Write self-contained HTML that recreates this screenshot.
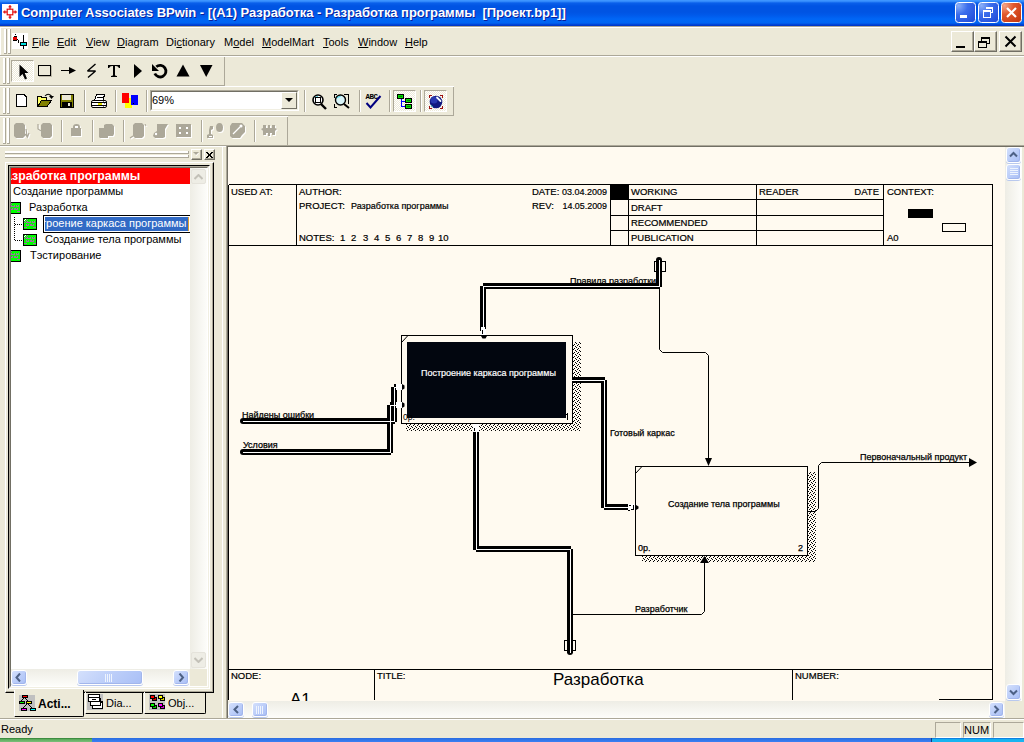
<!DOCTYPE html>
<html><head><meta charset="utf-8">
<style>
*{margin:0;padding:0;box-sizing:border-box}
html,body{width:1024px;height:742px;overflow:hidden;background:#ECE9D8;font-family:"Liberation Sans",sans-serif;font-size:11px;color:#000}
.a{position:absolute}
#title{left:0;top:0;width:1024px;height:26px;background:linear-gradient(#3D95FF 0,#3D95FF 1px,#0A60EA 3px,#0054E3 6px,#0054E3 12px,#0059EA 15px,#0066F6 19px,#0064F2 23px,#003DD0 25px,#0033C0 26px)}
#title .t{left:21px;top:5px;color:#fff;font-weight:bold;font-size:13px;letter-spacing:-0.05px;text-shadow:1px 1px 0 #0A1E9A;white-space:nowrap}
.sep-d{background:#ACA899}
.sep-w{background:#fff}
.menu span{position:absolute;top:8px;white-space:nowrap}
.menu u{text-decoration:underline;text-underline-offset:1px;text-decoration-thickness:1px}
.grip{width:6px}
.grip:before,.grip:after{content:"";position:absolute;top:0;bottom:0;width:3px;background:linear-gradient(90deg,#fff 0,#fff 2px,#ACA899 2px);border-bottom:1px solid #ACA899;box-sizing:border-box}
.grip:before{left:0}.grip:after{left:4px}
.tb{border-right:1px solid #ACA899;border-bottom:1px solid #ACA899;}
.vsep{width:2px;border-left:1px solid #ACA899;border-right:1px solid #fff}
.ico{width:12px;height:12px;background:#00FF00;border:1px solid #000}
.ico:after{content:"";position:absolute;left:1px;top:2px;width:8px;height:5px;border-top:1px dotted #A070A0;border-bottom:1px dotted #A070A0}
.sbtn{border:1px solid #fff;border-radius:3px;background:linear-gradient(135deg,#D4E0FC,#BCCEF9 50%,#A9BFF6);box-shadow:inset -1px -1px 0 #A2B6EC,0 1px 0 #B9C9EE}
.mdib{width:23px;height:21px;background:#ECE9D8;border-top:1px solid #fff;border-left:1px solid #fff;border-right:1px solid #716F64;border-bottom:1px solid #716F64;box-shadow:inset -1px -1px 0 #ACA899}
</style></head><body>
<!-- Title bar -->
<div id="title" class="a">
  <div class="a" style="left:2px;top:4px;width:16px;height:16px;background:#fff">
    <svg width="16" height="16" viewBox="0 0 17 17" style="position:absolute;left:0;top:0"><g stroke="#E00000" stroke-width="1.2" fill="none"><rect x="5.5" y="5.5" width="6" height="6"/><line x1="8.5" y1="1" x2="8.5" y2="5.5"/><line x1="8.5" y1="11.5" x2="8.5" y2="16"/><line x1="1" y1="8.5" x2="5.5" y2="8.5"/><line x1="11.5" y1="8.5" x2="16" y2="8.5"/><line x1="7" y1="3" x2="10" y2="3"/><line x1="7" y1="14" x2="10" y2="14"/><line x1="3" y1="7" x2="3" y2="10"/><line x1="14" y1="7" x2="14" y2="10"/></g></svg>
  </div>
  <div class="a t">Computer Associates BPwin - [(A1) Разработка - Разработка программы&nbsp; [Проект.bp1]]</div>
  <!-- buttons -->
  <svg class="a" style="left:954px;top:2px" width="70" height="22">
    <defs>
      <radialGradient id="bb" cx="0.15" cy="0.15" r="1"><stop offset="0" stop-color="#8CB0F8"/><stop offset="0.45" stop-color="#3C6EEC"/><stop offset="1" stop-color="#2450DC"/></radialGradient>
      <radialGradient id="rb" cx="0.15" cy="0.15" r="1"><stop offset="0" stop-color="#F4A488"/><stop offset="0.45" stop-color="#E2582C"/><stop offset="1" stop-color="#C83C14"/></radialGradient>
    </defs>
    <rect x="1.5" y="0.5" width="20" height="20" rx="3" fill="url(#bb)" stroke="#fff" stroke-width="1"/>
    <rect x="24.5" y="0.5" width="20" height="20" rx="3" fill="url(#bb)" stroke="#fff" stroke-width="1"/>
    <rect x="47.5" y="0.5" width="20" height="20" rx="3" fill="url(#rb)" stroke="#fff" stroke-width="1"/>
    <g shape-rendering="crispEdges" fill="#fff">
      <rect x="6" y="13" width="7" height="3"/>
      <rect x="32" y="5" width="7" height="2"/><rect x="38" y="5" width="1" height="6"/><rect x="37" y="10" width="2" height="1"/>
    </g>
    <rect x="29.5" y="9" width="7" height="6.5" fill="none" stroke="#fff" stroke-width="1" shape-rendering="crispEdges"/>
    <rect x="29" y="8" width="8" height="2" fill="#fff" shape-rendering="crispEdges"/>
    <path d="M53 6L62 15M62 6L53 15" stroke="#fff" stroke-width="2.2"/>
  </svg>
</div>
<div class="a sep-d" style="left:0;top:26px;width:1024px;height:1px"></div>
<div class="a sep-w" style="left:0;top:27px;width:1024px;height:1px"></div>

<!-- Menu bar -->
<div class="a menu" style="left:0;top:28px;width:1024px;height:27px">
  <div class="a grip" style="left:4px;top:1px;height:25px"></div>
  <svg class="a" style="left:12px;top:5px" width="16" height="16" shape-rendering="crispEdges">
    <rect x="0" y="0" width="16" height="16" fill="#fff"/>
    <rect x="3" y="1" width="1" height="1" fill="#000"/>
    <rect x="2" y="3" width="3" height="1" fill="#000"/>
    <rect x="1" y="4" width="4" height="3" fill="#E00000"/>
    <rect x="1" y="7" width="4" height="1" fill="#000"/>
    <rect x="5" y="6" width="1" height="1" fill="#000"/>
    <rect x="6" y="7" width="1" height="3" fill="#000"/>
    <rect x="11" y="2" width="1" height="14" fill="#000"/>
    <rect x="8" y="9" width="7" height="4" fill="#000"/>
    <rect x="9" y="10" width="5" height="2" fill="#00E0E0"/>
  </svg>
  <span style="left:32px"><u>F</u>ile</span>
  <span style="left:57px"><u>E</u>dit</span>
  <span style="left:86px"><u>V</u>iew</span>
  <span style="left:117px"><u>D</u>iagram</span>
  <span style="left:166px">Di<u>c</u>tionary</span>
  <span style="left:224px">M<u>o</u>del</span>
  <span style="left:262px"><u>M</u>odelMart</span>
  <span style="left:323px"><u>T</u>ools</span>
  <span style="left:358px"><u>W</u>indow</span>
  <span style="left:405px"><u>H</u>elp</span>
</div>

<!-- MDI buttons -->
<div class="a mdib" style="left:951px;top:31px"></div>
<div class="a mdib" style="left:974px;top:31px"></div>
<div class="a mdib" style="left:999px;top:31px"></div>
<svg class="a" style="left:946px;top:26px" width="78" height="30" shape-rendering="crispEdges">
  <rect x="10" y="20" width="9" height="2" fill="#000"/>
  <rect x="35" y="11" width="9" height="2" fill="#000"/><rect x="35" y="11" width="1" height="6" fill="#000"/><rect x="43" y="11" width="1" height="7" fill="#000"/><rect x="41" y="17" width="3" height="1" fill="#000"/>
  <rect x="32" y="15" width="9" height="2" fill="#000"/><rect x="32" y="15" width="1" height="7" fill="#000"/><rect x="40" y="15" width="1" height="7" fill="#000"/><rect x="32" y="21" width="9" height="1" fill="#000"/>
  <path d="M59.5 10.5L69.5 20.5M69.5 10.5L59.5 20.5" stroke="#000" stroke-width="2" shape-rendering="geometricPrecision"/>
</svg>
<div class="a" style="left:0;top:28px;width:1px;height:27px;background:#fff"></div>
<div class="a sep-d" style="left:0;top:55px;width:1024px;height:1px"></div>
<div class="a sep-w" style="left:0;top:56px;width:1024px;height:1px"></div>


<!-- Toolbar 1 -->
<div class="a" style="left:0;top:57px;width:225px;height:28px;border-right:1px solid #ACA899;">
  <div class="a grip" style="left:3px;top:1px;height:26px"></div>
  <div class="a" style="left:11px;top:60px;"></div>
</div>
<div class="a" style="left:11px;top:60px;width:23px;height:22px;border:1px solid #ACA899;border-right-color:#fff;border-bottom-color:#fff;background-color:#ECE9D8;background-image:linear-gradient(45deg,#fff 25%,transparent 25%,transparent 75%,#fff 75%),linear-gradient(45deg,#fff 25%,transparent 25%,transparent 75%,#fff 75%);background-size:2px 2px;background-position:0 0,1px 1px"></div>
<svg class="a" style="left:0;top:57px" width="225" height="28" shape-rendering="crispEdges">
  <!-- arrow cursor -->
  <path d="M19.5 7.5 V20 L22.5 17 L25 22.5 L27 21.5 L24.7 16 H28.5 Z" fill="#000" shape-rendering="geometricPrecision"/>
  <!-- rect -->
  <rect x="38.5" y="8.5" width="12" height="10" fill="none" stroke="#000"/>
  <line x1="39" y1="19.5" x2="52" y2="19.5" stroke="#BDB9A8"/>
  <line x1="51.5" y1="9" x2="51.5" y2="20" stroke="#BDB9A8"/>
  <!-- arrow -->
  <line x1="61" y1="13.5" x2="71" y2="13.5" stroke="#000"/>
  <path d="M69 10 L76 13.5 L69 17 Z" fill="#000" shape-rendering="geometricPrecision"/>
  <!-- lightning -->
  <path d="M95.5 7 L87.5 14 H95.5 L88 20.5" fill="none" stroke="#000" stroke-width="1.4" stroke-linejoin="bevel" shape-rendering="geometricPrecision"/>
  <!-- T -->
  <path d="M108 8 H120 V11 H119 Q118 9 116 9 H115 V18 Q115 19 117 19 V20 H111 V19 Q113 19 113 18 V9 H112 Q110 9 109 11 H108 Z" fill="#000" shape-rendering="geometricPrecision"/>
  <!-- play -->
  <path d="M134 7 L142 14 L134 21 Z" fill="#000" shape-rendering="geometricPrecision"/>
  <!-- rotate -->
  <path d="M156.3 9.8 A5.8 5.8 0 1 1 154.8 16.5" fill="none" stroke="#000" stroke-width="2.8" shape-rendering="geometricPrecision"/>
  <path d="M152 7 L152 14 L159 14 Z" fill="#000" shape-rendering="geometricPrecision"/>
  <!-- up -->
  <path d="M183 7.5 L189.5 19.5 L176.5 19.5 Z" fill="#000" shape-rendering="geometricPrecision"/>
  <!-- down -->
  <path d="M200 8 L212.5 8 L206.2 20 Z" fill="#000" shape-rendering="geometricPrecision"/>
</svg>
<div class="a sep-d" style="left:0;top:85px;width:225px;height:1px"></div>
<div class="a sep-w" style="left:0;top:86px;width:454px;height:1px"></div>

<!-- Toolbar 2 -->
<div class="a" style="left:0;top:87px;width:454px;height:28px;border-right:1px solid #ACA899;">
  <div class="a grip" style="left:3px;top:1px;height:26px"></div>
</div>
<div class="a vsep" style="left:84px;top:90px;height:22px"></div>
<div class="a vsep" style="left:115px;top:90px;height:22px"></div>
<div class="a vsep" style="left:146px;top:90px;height:22px"></div>
<div class="a vsep" style="left:304px;top:90px;height:22px"></div>
<div class="a vsep" style="left:359px;top:90px;height:22px"></div>
<div class="a vsep" style="left:389px;top:90px;height:22px"></div>
<div class="a vsep" style="left:420px;top:90px;height:22px"></div>
<!-- combo -->
<div class="a" style="left:150px;top:90px;width:149px;height:21px;border:1px solid #ACA899;border-right-color:#fff;border-bottom-color:#fff;">
  <div class="a" style="left:0;top:0;width:147px;height:19px;border:1px solid #716F64;border-right-color:#F1EFE2;border-bottom-color:#F1EFE2;background:#fff"></div>
  <div class="a" style="left:1px;top:3px;font-size:11px">69%</div>
  <div class="a" style="left:130px;top:1px;width:16px;height:17px;background:#ECE9D8;border:1px solid #fff;border-right-color:#716F64;border-bottom-color:#716F64"></div>
  <svg class="a" style="left:134px;top:7px" width="8" height="5"><path d="M0 0H8L4 4Z" fill="#000"/></svg>
</div>
<!-- pressed buttons -->
<div class="a pbtn" style="left:393px;top:90px;width:23px;height:22px;border:1px solid #ACA899;border-right-color:#fff;border-bottom-color:#fff;background-color:#ECE9D8;background-image:linear-gradient(45deg,#fff 25%,transparent 25%,transparent 75%,#fff 75%),linear-gradient(45deg,#fff 25%,transparent 25%,transparent 75%,#fff 75%);background-size:2px 2px;background-position:0 0,1px 1px"></div>
<div class="a pbtn" style="left:424px;top:90px;width:23px;height:22px;border:1px solid #ACA899;border-right-color:#fff;border-bottom-color:#fff;background-color:#ECE9D8;background-image:linear-gradient(45deg,#fff 25%,transparent 25%,transparent 75%,#fff 75%),linear-gradient(45deg,#fff 25%,transparent 25%,transparent 75%,#fff 75%);background-size:2px 2px;background-position:0 0,1px 1px"></div>
<svg class="a" style="left:0;top:87px" width="454" height="28" shape-rendering="crispEdges">
  <!-- new doc -->
  <path d="M16.5 7.5 H24 L26.5 10 V19.5 H16.5 Z" fill="#fff" stroke="#000"/>
  <!-- open folder -->
  <path d="M37.5 9.5 H41 L42 10.5 H46 V13.5 H51.5 L47 19.5 H37.5 Z" fill="#FFFF66" stroke="#000"/>
  <path d="M38 19 L41.5 13.5 H51.5 L47.5 19 Z" fill="#808000" stroke="#000"/>
  <path d="M45 9 Q48 5.5 51.5 9" fill="none" stroke="#000" stroke-width="1.1" shape-rendering="geometricPrecision"/>
  <path d="M49 9 H54 L51.5 12 Z" fill="#000" shape-rendering="geometricPrecision"/>
  <!-- save -->
  <rect x="60.5" y="7.5" width="13" height="13" fill="#808000" stroke="#000"/>
  <rect x="62" y="8" width="9" height="5" fill="#ECE9D8"/>
  <rect x="62" y="15" width="10" height="5" fill="#000"/>
  <rect x="68" y="16" width="2" height="3" fill="#ECE9D8"/>
  <!-- printer -->
  <path d="M96.5 7.5 H104.5 L103 13.5 H94.5 Z" fill="#fff" stroke="#000"/>
  <path d="M97 10.5 H102.5" stroke="#000"/>
  <rect x="91.5" y="13.5" width="15" height="7" rx="1.5" fill="#fff" stroke="#000" shape-rendering="geometricPrecision"/>
  <path d="M92 15.5 H106 M92 18.5 H106" stroke="#000"/>
  <rect x="98" y="16" width="4" height="2" fill="#E0E000"/>
  <rect x="103" y="14" width="1" height="1" fill="#808080"/><rect x="104" y="16" width="1" height="1" fill="#808080"/><rect x="103" y="19" width="1" height="1" fill="#808080"/>
  <!-- colors -->
  <rect x="125" y="11" width="7" height="10" fill="#FFFF00"/>
  <rect x="122" y="6" width="7" height="10" fill="#FF0000"/>
  <rect x="131" y="8" width="7" height="10" fill="#0000FF"/>
  <rect x="133" y="16" width="1" height="1" fill="#000"/>
  <!-- zoom in -->
  <circle cx="318" cy="13" r="5" fill="#fff" stroke="#000" stroke-width="1.6" shape-rendering="geometricPrecision"/>
  <path d="M315 11Q316 9.5 318 9.5" stroke="#40D0E0" stroke-width="1.2" fill="none" shape-rendering="geometricPrecision"/>
  <rect x="315.5" y="10.5" width="5" height="5" fill="none" stroke="#000"/>
  <path d="M321 17 L326 22" stroke="#000" stroke-width="2.4" shape-rendering="geometricPrecision"/>
  <!-- zoom fit -->
  <path d="M334.5 11V7.5H337M344 7.5H348.5V17M337 20.5H334.5V17" fill="none" stroke="#000"/>
  <circle cx="340.5" cy="13" r="5" fill="#D8F4F8" stroke="#000" stroke-width="1.4" shape-rendering="geometricPrecision"/>
  <path d="M337 11Q338 9.5 340.5 9.5" stroke="#40D0E0" stroke-width="1.2" fill="none" shape-rendering="geometricPrecision"/>
  <path d="M344 17 L349 21" stroke="#000" stroke-width="2" shape-rendering="geometricPrecision"/>
  <!-- spell -->
  <text x="365.5" y="12.2" font-family="Liberation Mono" font-weight="bold" font-size="7.5" fill="#000" textLength="12.5" shape-rendering="geometricPrecision">ABC</text>
  <path d="M366.5 16 L370.5 20.5 L380.5 9" fill="none" stroke="#000080" stroke-width="2" shape-rendering="geometricPrecision"/>
  <!-- tree -->
  <path d="M401.5 12V19.5H405M401.5 14.5H405" fill="none" stroke="#0000FF"/>
  <rect x="397" y="7" width="7" height="5" fill="#000"/><rect x="398" y="8" width="5" height="3" fill="#00E000"/><rect x="399" y="9" width="3" height="1" fill="#008000"/>
  <rect x="405" y="11" width="7" height="5" fill="#000"/><rect x="406" y="12" width="5" height="3" fill="#00E000"/><rect x="407" y="13" width="3" height="1" fill="#008000"/>
  <rect x="405" y="17" width="7" height="5" fill="#000"/><rect x="406" y="18" width="5" height="3" fill="#00E000"/><rect x="407" y="19" width="3" height="1" fill="#008000"/>
  <!-- globe -->
  <path d="M429.5 11V8.5H432M440 8.5H442.5V11M442.5 19V21.5H440M432 21.5H429.5V19" fill="none" stroke="#A01010"/>
  <circle cx="436" cy="15" r="6.3" fill="#101880" shape-rendering="geometricPrecision"/>
  <circle cx="434" cy="13" r="3.5" fill="#2838B0" shape-rendering="geometricPrecision"/>
  <path d="M437 10.5L440.5 14" stroke="#F0F8FF" stroke-width="1.8" stroke-linecap="round" shape-rendering="geometricPrecision"/>
  <path d="M431 18L433 20" stroke="#30A0A0" stroke-width="1" shape-rendering="geometricPrecision"/>
</svg>
<div class="a sep-d" style="left:0;top:115px;width:454px;height:1px"></div>
<div class="a sep-w" style="left:0;top:116px;width:288px;height:1px"></div>

<!-- Toolbar 3 -->
<div class="a" style="left:0;top:117px;width:288px;height:28px;border-right:1px solid #ACA899;">
  <div class="a grip" style="left:3px;top:1px;height:26px"></div>
</div>
<div class="a vsep" style="left:61px;top:120px;height:22px"></div>
<div class="a vsep" style="left:92px;top:120px;height:22px"></div>
<div class="a vsep" style="left:123px;top:120px;height:22px"></div>
<div class="a vsep" style="left:201px;top:120px;height:22px"></div>
<div class="a vsep" style="left:254px;top:120px;height:22px"></div>
<svg class="a" style="left:0;top:117px" width="288" height="28">
 <g fill="#fff" stroke="#fff" stroke-width="0" transform="translate(1,1)">
  <path d="M16 6H23L25 8V19L23 21H16L14 19V8Z"/>
  <path d="M26 12L27 19M25 17L27.5 20L29 16" fill="none" stroke="#fff" stroke-width="1.2"/>
  <path d="M43 6H50L52 8V19L50 21H43L41 19V8Z"/>
  <path d="M38 7V12L41 14" fill="none" stroke="#fff" stroke-width="1.2"/>
  <path d="M73 11V10Q73 7 76.5 7Q80 7 80 10V11H81V19H71V11Z"/>
  <path d="M99 11H104V8L106 7H112L114 9V17L113 19H108V21H100L99 20Z"/>
  <path d="M135 6H142L144 8V19L142 21H135L133 19V8Z"/>
  <path d="M133 19L130 21" fill="none" stroke="#fff" stroke-width="1.2"/>
  <path d="M145 7L146 9" fill="none" stroke="#fff" stroke-width="1"/>
  <path d="M157 7H168L165 12V20L163 21H155L153 19L154 16L157 14Z"/>
  <rect x="176" y="7" width="15" height="13"/>
  <path d="M210 9H213V12L211 13V17L213 18V21H207V18L209 17V13Z"/>
  <ellipse cx="219.5" cy="10.5" rx="3.5" ry="4.5"/>
  <path d="M232 6H242L245 9V15L242 18L240 21H232L230 19V9Z"/>
  <path d="M263 8H266V11H268V8H270V11H272V8H275V11L277 12L275 14V18H272V16H270V19H268V16H266V18H263V14L261 12L263 11Z"/>
 </g>
 <g fill="#ACA899" stroke="#ACA899" stroke-width="0">
  <path d="M16 6H23L25 8V19L23 21H16L14 19V8Z"/>
  <path d="M26 12L27 19M25 17L27.5 20L29 16" fill="none" stroke="#ACA899" stroke-width="1.2"/>
  <path d="M43 6H50L52 8V19L50 21H43L41 19V8Z"/>
  <path d="M38 7V12L41 14" fill="none" stroke="#ACA899" stroke-width="1.2"/>
  <path d="M73 11V10Q73 7 76.5 7Q80 7 80 10V11H81V19H71V11Z"/>
  <path d="M99 11H104V8L106 7H112L114 9V17L113 19H108V21H100L99 20Z"/>
  <path d="M135 6H142L144 8V19L142 21H135L133 19V8Z"/>
  <path d="M133 19L130 21" fill="none" stroke="#ACA899" stroke-width="1.2"/>
  <path d="M145 7L146 9" fill="none" stroke="#ACA899" stroke-width="1"/>
  <path d="M157 7H168L165 12V20L163 21H155L153 19L154 16L157 14Z"/>
  <rect x="176" y="7" width="15" height="13"/>
  <path d="M210 9H213V12L211 13V17L213 18V21H207V18L209 17V13Z"/>
  <ellipse cx="219.5" cy="10.5" rx="3.5" ry="4.5"/>
  <path d="M232 6H242L245 9V15L242 18L240 21H232L230 19V9Z"/>
  <path d="M263 8H266V11H268V8H270V11H272V8H275V11L277 12L275 14V18H272V16H270V19H268V16H266V18H263V14L261 12L263 11Z"/>
 </g>
 <g fill="#fff">
  <rect x="179" y="10" width="2" height="2"/><rect x="186" y="10" width="2" height="2"/>
  <rect x="179" y="15" width="2" height="2"/><rect x="186" y="15" width="2" height="2"/>
  <rect x="75" y="9" width="3" height="2"/>
  <path d="M233 17L240 10" stroke="#fff" stroke-width="1.3" fill="none"/>
  <circle cx="241" cy="9" r="1.5"/>
  <rect x="209" y="19" width="3" height="1"/>
  <circle cx="156" cy="17" r="1.2" fill="#fff"/>
 </g>
</svg>
<div class="a sep-d" style="left:0;top:145px;width:288px;height:1px"></div>
<div class="a sep-w" style="left:0;top:146px;width:226px;height:1px"></div>


<!-- Left panel -->
<div class="a" style="left:5px;top:151px;width:184px;height:3px;background:linear-gradient(#fff 0,#fff 2px,#ACA899 2px);border-right:1px solid #ACA899"></div>
<div class="a" style="left:5px;top:155px;width:184px;height:3px;background:linear-gradient(#fff 0,#fff 2px,#ACA899 2px);border-right:1px solid #ACA899"></div>
<div class="a" style="left:191px;top:149px;width:11px;height:11px;border:1px solid #fff;border-right-color:#716F64;border-bottom-color:#716F64;box-shadow:inset -1px -1px 0 #ACA899"></div>
<svg class="a" style="left:193px;top:152px" width="7" height="5"><path d="M1 1H6L3.5 4Z" fill="#fff"/><path d="M0 0H6L3 3Z" fill="#ACA899"/></svg>
<div class="a" style="left:204px;top:149px;width:11px;height:11px;border:1px solid #fff;border-right-color:#716F64;border-bottom-color:#716F64;box-shadow:inset -1px -1px 0 #ACA899"></div>
<svg class="a" style="left:206px;top:152px" width="7" height="6" shape-rendering="crispEdges"><g fill="#000"><rect x="0" y="0" width="1" height="1"/><rect x="1" y="0" width="1" height="1"/><rect x="5" y="0" width="1" height="1"/><rect x="6" y="0" width="1" height="1"/><rect x="1" y="1" width="1" height="1"/><rect x="2" y="1" width="1" height="1"/><rect x="4" y="1" width="1" height="1"/><rect x="5" y="1" width="1" height="1"/><rect x="2" y="2" width="1" height="1"/><rect x="3" y="2" width="1" height="1"/><rect x="4" y="2" width="1" height="1"/><rect x="2" y="3" width="1" height="1"/><rect x="3" y="3" width="1" height="1"/><rect x="4" y="3" width="1" height="1"/><rect x="1" y="4" width="1" height="1"/><rect x="2" y="4" width="1" height="1"/><rect x="4" y="4" width="1" height="1"/><rect x="5" y="4" width="1" height="1"/><rect x="0" y="5" width="1" height="1"/><rect x="1" y="5" width="1" height="1"/><rect x="5" y="5" width="1" height="1"/><rect x="6" y="5" width="1" height="1"/></g></svg>
<!-- tab page frame -->
<div class="a" style="left:5px;top:162px;width:209px;height:531px;border-top:1px solid #fff;border-left:1px solid #fff;border-right:1px solid #000;border-bottom:1px solid #000"></div>
<div class="a" style="left:6px;top:163px;width:207px;height:529px;border-right:1px solid #ACA899;border-bottom:1px solid #ACA899"></div>
<!-- listbox -->
<div class="a" style="left:8px;top:165px;width:202px;height:524px;border-top:1px solid #000;border-left:1px solid #000;border-right:1px solid #fff;border-bottom:1px solid #fff;"></div>
<div class="a" style="left:9px;top:166px;width:200px;height:522px;border-top:1px solid #ACA899;border-left:1px solid #ACA899;border-right:1px solid #F1EFE2;border-bottom:1px solid #F1EFE2;"></div>
<div class="a" style="left:10px;top:167px;width:198px;height:520px;border-top:1px solid #716F64;border-left:1px solid #716F64;border-right:1px solid #fff;border-bottom:1px solid #fff;"></div>
<div class="a" style="left:11px;top:168px;width:196px;height:518px;background:#fff;overflow:hidden">
  <div class="a" style="left:0;top:0;width:179px;height:16px;background:#FF0000"></div>
  <div class="a" style="left:-14px;top:1px;color:#fff;font-weight:bold;font-size:12.3px;white-space:nowrap">Разработка программы</div>
  <div class="a" style="left:2px;top:17px;white-space:nowrap">Создание программы</div>
  <div class="a" style="left:18px;top:33px;white-space:nowrap">Разработка</div>
  <div class="a" style="left:32px;top:47px;width:149px;height:18px;border:1px solid #000;background:#fff"></div>
  <div class="a" style="left:34px;top:49px;width:143px;height:14px;background:#316AC5;overflow:hidden"><div class="a" style="left:-23.5px;top:0px;color:#fff;white-space:nowrap;">Построение каркаса программы</div></div>
  <div class="a" style="left:177px;top:49px;width:1px;height:14px;background:#E0A030"></div>
  <div class="a" style="left:34px;top:65px;white-space:nowrap">Создание тела программы</div>
  <div class="a" style="left:19px;top:81px;white-space:nowrap">Тэстирование</div>
  <!-- icons -->
  <svg class="a" style="left:-4px;top:34px" width="14" height="12" shape-rendering="crispEdges"><rect width="14" height="12" fill="#000"/><rect x="1" y="1" width="12" height="10" fill="#00FF00"/><g fill="#A070A0"><rect x="3" y="4" width="5" height="1"/><rect x="4" y="3" width="1" height="1"/><rect x="7" y="3" width="1" height="1"/><rect x="9" y="4" width="3" height="1"/><rect x="9" y="3" width="1" height="1"/><rect x="11" y="3" width="1" height="1"/><rect x="3" y="7" width="3" height="1"/><rect x="3" y="6" width="1" height="1"/><rect x="5" y="6" width="1" height="1"/><rect x="7" y="7" width="4" height="1"/><rect x="7" y="6" width="2" height="1"/><rect x="10" y="6" width="1" height="1"/><rect x="1" y="9" width="3" height="1"/><rect x="10" y="9" width="3" height="1"/><rect x="1" y="4" width="1" height="1"/><rect x="2" y="3" width="1" height="1"/><rect x="3" y="2" width="1" height="1"/><rect x="4" y="1" width="1" height="1"/></g><g fill="#fff"><rect x="1" y="2" width="1" height="1"/><rect x="2" y="1" width="1" height="1"/></g></svg>
  <svg class="a" style="left:12px;top:50px" width="14" height="12" shape-rendering="crispEdges"><rect width="14" height="12" fill="#000"/><rect x="1" y="1" width="12" height="10" fill="#00FF00"/><g fill="#A070A0"><rect x="3" y="4" width="5" height="1"/><rect x="4" y="3" width="1" height="1"/><rect x="7" y="3" width="1" height="1"/><rect x="9" y="4" width="3" height="1"/><rect x="9" y="3" width="1" height="1"/><rect x="11" y="3" width="1" height="1"/><rect x="3" y="7" width="3" height="1"/><rect x="3" y="6" width="1" height="1"/><rect x="5" y="6" width="1" height="1"/><rect x="7" y="7" width="4" height="1"/><rect x="7" y="6" width="2" height="1"/><rect x="10" y="6" width="1" height="1"/><rect x="1" y="9" width="3" height="1"/><rect x="10" y="9" width="3" height="1"/><rect x="1" y="4" width="1" height="1"/><rect x="2" y="3" width="1" height="1"/><rect x="3" y="2" width="1" height="1"/><rect x="4" y="1" width="1" height="1"/></g><g fill="#fff"><rect x="1" y="2" width="1" height="1"/><rect x="2" y="1" width="1" height="1"/></g></svg>
  <svg class="a" style="left:12px;top:66px" width="14" height="12" shape-rendering="crispEdges"><rect width="14" height="12" fill="#000"/><rect x="1" y="1" width="12" height="10" fill="#00FF00"/><g fill="#A070A0"><rect x="3" y="4" width="5" height="1"/><rect x="4" y="3" width="1" height="1"/><rect x="7" y="3" width="1" height="1"/><rect x="9" y="4" width="3" height="1"/><rect x="9" y="3" width="1" height="1"/><rect x="11" y="3" width="1" height="1"/><rect x="3" y="7" width="3" height="1"/><rect x="3" y="6" width="1" height="1"/><rect x="5" y="6" width="1" height="1"/><rect x="7" y="7" width="4" height="1"/><rect x="7" y="6" width="2" height="1"/><rect x="10" y="6" width="1" height="1"/><rect x="1" y="9" width="3" height="1"/><rect x="10" y="9" width="3" height="1"/><rect x="1" y="4" width="1" height="1"/><rect x="2" y="3" width="1" height="1"/><rect x="3" y="2" width="1" height="1"/><rect x="4" y="1" width="1" height="1"/></g><g fill="#fff"><rect x="1" y="2" width="1" height="1"/><rect x="2" y="1" width="1" height="1"/></g></svg>
  <svg class="a" style="left:-4px;top:82px" width="14" height="12" shape-rendering="crispEdges"><rect width="14" height="12" fill="#000"/><rect x="1" y="1" width="12" height="10" fill="#00FF00"/><g fill="#A070A0"><rect x="3" y="4" width="5" height="1"/><rect x="4" y="3" width="1" height="1"/><rect x="7" y="3" width="1" height="1"/><rect x="9" y="4" width="3" height="1"/><rect x="9" y="3" width="1" height="1"/><rect x="11" y="3" width="1" height="1"/><rect x="3" y="7" width="3" height="1"/><rect x="3" y="6" width="1" height="1"/><rect x="5" y="6" width="1" height="1"/><rect x="7" y="7" width="4" height="1"/><rect x="7" y="6" width="2" height="1"/><rect x="10" y="6" width="1" height="1"/><rect x="1" y="9" width="3" height="1"/><rect x="10" y="9" width="3" height="1"/><rect x="1" y="4" width="1" height="1"/><rect x="2" y="3" width="1" height="1"/><rect x="3" y="2" width="1" height="1"/><rect x="4" y="1" width="1" height="1"/></g><g fill="#fff"><rect x="1" y="2" width="1" height="1"/><rect x="2" y="1" width="1" height="1"/></g></svg>
  <svg class="a" style="left:0;top:48px" width="14" height="26"><path d="M3.5 1V24.5 M3.5 8.5H12 M3.5 24.5H12" stroke="#000" stroke-dasharray="1 1" fill="none" shape-rendering="crispEdges"/></svg>
  <!-- v scrollbar -->
  <div class="a" style="left:179px;top:0;width:17px;height:501px;background:linear-gradient(90deg,#EEEDE5,#FDFDFA)"></div>
  <div class="a" style="left:180px;top:1px;width:15px;height:15px;border:1px solid #E5E3DB;border-radius:2px;background:#EEEDE5"></div>
  <svg class="a" style="left:183px;top:6px" width="9" height="6"><path d="M0.5 5L4.5 1L8.5 5" stroke="#C3C1B8" stroke-width="2" fill="none"/></svg>
  <div class="a" style="left:180px;top:484px;width:15px;height:16px;border:1px solid #E5E3DB;border-radius:2px;background:#EEEDE5"></div>
  <svg class="a" style="left:183px;top:489px" width="9" height="6"><path d="M0.5 1L4.5 5L8.5 1" stroke="#C3C1B8" stroke-width="2" fill="none"/></svg>
  <!-- h scrollbar -->
  <div class="a" style="left:0;top:501px;width:179px;height:17px;background:linear-gradient(#EEEDE5,#FDFDFA)"></div>
  <div class="a sbtn" style="left:0;top:502px;width:16px;height:15px"></div>
  <svg class="a" style="left:4px;top:505px" width="7" height="9"><path d="M5 0.5L1.5 4.5L5 8.5" stroke="#4D6185" stroke-width="2" fill="none"/></svg>
  <div class="a sbtn" style="left:66px;top:502px;width:66px;height:15px"></div>
  <svg class="a" style="left:94px;top:506px" width="9" height="8"><path d="M0.5 0V8M2.5 0V8M4.5 0V8M6.5 0V8" stroke="#EEF4FE" fill="none"/></svg>
  <div class="a sbtn" style="left:162px;top:502px;width:16px;height:15px"></div>
  <svg class="a" style="left:167px;top:505px" width="7" height="9"><path d="M1.5 0.5L5 4.5L1.5 8.5" stroke="#4D6185" stroke-width="2" fill="none"/></svg>
  <div class="a" style="left:179px;top:501px;width:17px;height:17px;background:#ECE9D8"></div>
</div>
<!-- tabs -->
<div class="a" style="left:14px;top:690px;width:70px;height:27px;background:#ECE9D8;border-left:1px solid #fff;border-bottom:1px solid #000;border-right:1px solid #000;border-bottom-right-radius:2px"></div>
<div class="a" style="left:85px;top:692px;width:58px;height:22px;border-right:1px solid #000;border-bottom:1px solid #000;border-left:1px solid #fff;border-bottom-right-radius:2px"></div>
<div class="a" style="left:144px;top:692px;width:62px;height:22px;border-right:1px solid #000;border-bottom:1px solid #000;border-left:1px solid #fff;border-bottom-right-radius:2px"></div>
<div class="a" style="left:38px;top:697px;font-weight:bold;font-size:12px">Acti...</div>
<div class="a" style="left:106px;top:697px;">Dia...</div>
<div class="a" style="left:168px;top:697px;">Obj...</div>
<svg class="a" style="left:19px;top:695px" width="17" height="17" shape-rendering="crispEdges">
  <rect x="0" y="0" width="16" height="16" fill="#C0C0C0"/>
  <path d="M5 3L2 6M6 3L9 6M8 9L4 13M9 9L13 13" stroke="#000" stroke-width="1" shape-rendering="geometricPrecision"/>
  <rect x="3" y="0" width="6" height="3" fill="#000"/><rect x="4" y="1" width="4" height="1" fill="#f00"/>
  <rect x="0" y="6" width="6" height="3" fill="#000"/><rect x="1" y="7" width="4" height="1" fill="#0e0"/>
  <rect x="7" y="6" width="6" height="3" fill="#000"/><rect x="8" y="7" width="4" height="1" fill="#ff0"/>
  <rect x="2" y="13" width="6" height="3" fill="#000"/><rect x="3" y="14" width="4" height="1" fill="#f0f"/>
  <rect x="11" y="13" width="6" height="3" fill="#000"/><rect x="12" y="14" width="4" height="1" fill="#0ff"/>
</svg>
<svg class="a" style="left:87px;top:693px" width="17" height="17" shape-rendering="crispEdges">
  <rect x="0" y="1" width="16" height="16" fill="#C0C0C0"/>
  <rect x="5" y="8" width="11" height="8" fill="#000"/><rect x="6" y="10" width="9" height="5" fill="#fff"/>
  <rect x="3" y="5" width="11" height="8" fill="#000"/><rect x="4" y="7" width="9" height="5" fill="#fff"/>
  <rect x="1" y="1" width="12" height="8" fill="#000"/><rect x="2" y="2" width="10" height="6" fill="#fff"/>
  <rect x="2" y="4" width="10" height="1" fill="#000"/><rect x="5" y="6" width="4" height="1" fill="#000"/>
</svg>
<svg class="a" style="left:149px;top:694px" width="17" height="17" shape-rendering="crispEdges">
  <rect x="0" y="0" width="16" height="16" fill="#C0C0C0"/>
  <rect x="3" y="3" width="5" height="4" fill="#000"/><rect x="4" y="4" width="3" height="2" fill="#c00"/>
  <rect x="1" y="1" width="5" height="4" fill="#000"/><rect x="2" y="2" width="3" height="2" fill="#f00"/>
  <rect x="11" y="3" width="5" height="4" fill="#000"/><rect x="12" y="4" width="3" height="2" fill="#cc0"/>
  <rect x="9" y="1" width="5" height="4" fill="#000"/><rect x="10" y="2" width="3" height="2" fill="#ff0"/>
  <rect x="3" y="11" width="5" height="4" fill="#000"/><rect x="4" y="12" width="3" height="2" fill="#0c0"/>
  <rect x="1" y="9" width="5" height="4" fill="#000"/><rect x="2" y="10" width="3" height="2" fill="#0f0"/>
  <rect x="11" y="11" width="5" height="4" fill="#000"/><rect x="12" y="12" width="3" height="2" fill="#c0c"/>
  <rect x="9" y="9" width="5" height="4" fill="#000"/><rect x="10" y="10" width="3" height="2" fill="#f0f"/>
</svg>

<!-- Canvas -->
<div class="a" style="left:228px;top:147px;width:777px;height:554px;background:#FFFAF0;overflow:hidden"></div>
<svg class="a" style="left:0;top:0" width="1024" height="742" font-family="Liberation Sans">
<defs>
  <pattern id="sh" width="4" height="4" patternUnits="userSpaceOnUse">
    <rect x="0" y="3" width="1" height="1" fill="#000"/><rect x="1" y="1" width="1" height="1" fill="#000"/>
    <rect x="2" y="0" width="1" height="1" fill="#000"/><rect x="3" y="2" width="1" height="1" fill="#000"/>
    
  </pattern>
  <clipPath id="cv"><rect x="228" y="147" width="777" height="554"/></clipPath>
</defs>
<g clip-path="url(#cv)">
 <g shape-rendering="crispEdges" stroke="#000" fill="none">
  <!-- header table -->
  <path d="M228.5 184.5H992.5V700M228.5 184.5V700M228.5 245.5H992.5M296.5 184.5V245.5M610.5 184.5V245.5M628.5 184.5V245.5M756.5 184.5V245.5M883.5 184.5V245.5M610.5 199.5H883.5M610.5 215.5H883.5M610.5 230.5H883.5"/>
  <rect x="611" y="185" width="17" height="14" fill="#000" stroke="none"/>
  <rect x="908" y="209" width="25" height="9" fill="#000" stroke="none"/>
  <rect x="942.5" y="223.5" width="23" height="8"/>
  <!-- footer -->
  <path d="M228.5 669.5H992.5M374.5 669.5V700M792.5 669.5V700M939 699.5H992.5"/>
 </g>
 <g font-size="9.5" fill="#000" stroke="#000" stroke-width="0.2">
  <text x="231" y="195">USED AT:</text>
  <text x="299" y="195">AUTHOR:</text>
  <text x="299" y="209">PROJECT:</text>
  <text x="351" y="209" font-size="9">Разработка программы</text>
  <text x="299" y="241">NOTES:</text><text x="340" y="241">1</text><text x="351" y="241">2</text><text x="363" y="241">3</text><text x="374" y="241">4</text><text x="385" y="241">5</text><text x="396" y="241">6</text><text x="407" y="241">7</text><text x="418" y="241">8</text><text x="429" y="241">9</text><text x="438" y="241">10</text>
  <text x="532" y="195">DATE:</text><text x="562" y="195" textLength="45" lengthAdjust="spacingAndGlyphs">03.04.2009</text>
  <text x="532" y="209">REV:</text>
  <text x="562.5" y="209" textLength="44.5" lengthAdjust="spacingAndGlyphs">14.05.2009</text>
  <text x="631" y="195">WORKING</text>
  <text x="631" y="211">DRAFT</text>
  <text x="631" y="226">RECOMMENDED</text>
  <text x="631" y="241">PUBLICATION</text>
  <text x="759" y="195">READER</text>
  <text x="879" y="195" text-anchor="end">DATE</text>
  <text x="887" y="195">CONTEXT:</text>
  <text x="887" y="241">A0</text>
  <text x="231" y="679">NODE:</text>
  <text x="377" y="679">TITLE:</text>
  <text x="795" y="679">NUMBER:</text>
  <text x="290" y="705" font-size="17" stroke="none">A1</text>
  <text x="553" y="685" font-size="17" stroke="none">Разработка</text>
 </g>

 <!-- Box 1 -->
 <rect x="406" y="424" width="175" height="7" fill="url(#sh)"/>
 <rect x="573" y="342" width="8" height="89" fill="url(#sh)"/>
 <rect x="401.5" y="335.5" width="171" height="88" fill="#FFFAF0" stroke="#000" shape-rendering="crispEdges"/>
 <rect x="407" y="342" width="159" height="76" fill="#02060F"/>
 <path d="M402 342 L407.5 336" stroke="#000"/>
 <text x="421" y="376" font-size="9" fill="#fff" stroke="#fff" stroke-width="0.2">Построение каркаса программы</text>
 <text x="403" y="420" font-size="8.5" fill="#000">0р.</text>
 <path d="M567.5 413V420M566 414.5H567" stroke="#000" shape-rendering="crispEdges"/>
 <!-- Box 2 -->
 <rect x="642" y="556" width="174" height="6" fill="url(#sh)"/>
 <rect x="808" y="472" width="8" height="90" fill="url(#sh)"/>
 <rect x="635.5" y="466.5" width="172" height="89" fill="#FFFAF0" stroke="#000" shape-rendering="crispEdges"/>
 <path d="M636 473 L641.5 467" stroke="#000"/>
 <text x="668" y="507" font-size="9" fill="#000" stroke="#000" stroke-width="0.25">Создание тела программы</text>
 <text x="638" y="551" font-size="9" fill="#000" stroke="#000" stroke-width="0.25">0р.</text>
 <text x="798" y="551" font-size="9" fill="#000" stroke="#000" stroke-width="0.25">2</text>

 <!-- thin arrows -->
 <g stroke="#000" fill="none" shape-rendering="geometricPrecision">
  <path d="M659.5 284V349.5L662.5 352.5H705.5L708.5 355.5V460"/>
  <path d="M573 614.5H701.5L704.5 611.5V562"/>
  <path d="M807 511.5H815.5L818.5 508.5V465.5L821.5 462.5H972"/>
 </g>
 <path d="M705 458H712L708.5 466Z" fill="#000"/>
 <path d="M700 563H709L704.5 556Z" fill="#000"/>
 <path d="M969 458L977 462.5L969 467Z" fill="#000"/>
 <g font-size="9" fill="#000" stroke="#000" stroke-width="0.25">
  <text x="860" y="460">Первоначальный продукт</text>
  <text x="635" y="612">Разработчик</text>
  <text x="610" y="436">Готовый каркас</text>
  <text x="242" y="418">Найдены ошибки</text>
  <text x="243" y="448">Условия</text>
  <text x="570" y="284">Правила разработки</text>
 </g>

 <!-- highlighted (selected) arrows: 3px black, 1px white, 2px black -->
 <g shape-rendering="crispEdges">
  <g fill="#000">
   <rect x="656" y="260" width="6" height="27"/>
   <rect x="483" y="283" width="177" height="6"/>
   <rect x="480" y="286" width="6" height="45"/>
   <rect x="572" y="377" width="33" height="6"/>
   <rect x="601" y="380" width="6" height="128"/>
   <rect x="604" y="504" width="25" height="6"/>
   <rect x="473" y="426" width="6" height="124"/>
   <rect x="476" y="546" width="95" height="6"/>
   <rect x="567" y="549" width="6" height="104"/>
   <rect x="243" y="418" width="152" height="6"/>
   <rect x="391" y="387" width="6" height="35"/>
   <rect x="394" y="384" width="6" height="6"/>
   <rect x="243" y="449" width="148" height="6"/>
   <rect x="387" y="405" width="6" height="48"/>
   <rect x="390" y="402" width="10" height="6"/>
  </g>
  <g fill="#000">
   <circle cx="659" cy="260" r="3" shape-rendering="geometricPrecision"/><circle cx="570" cy="652" r="3" shape-rendering="geometricPrecision"/>
   <circle cx="243" cy="421" r="3" shape-rendering="geometricPrecision"/><circle cx="243" cy="452" r="3" shape-rendering="geometricPrecision"/>
  </g>
  <g fill="#fff">
   <rect x="659" y="260" width="1" height="27"/>
   <rect x="483" y="286" width="177" height="1"/>
   <rect x="483" y="286" width="1" height="45"/>
   <rect x="572" y="380" width="33" height="1"/>
   <rect x="604" y="380" width="1" height="128"/>
   <rect x="604" y="507" width="25" height="1"/>
   <rect x="476" y="426" width="1" height="124"/>
   <rect x="476" y="549" width="95" height="1"/>
   <rect x="570" y="549" width="1" height="104"/>
   <rect x="243" y="421" width="152" height="1"/>
   <rect x="394" y="387" width="1" height="35"/>
   <rect x="394" y="387" width="6" height="1"/>
   <rect x="243" y="452" width="148" height="1"/>
   <rect x="390" y="405" width="1" height="48"/>
   <rect x="390" y="405" width="10" height="1"/>
  </g>
 </g>
 <!-- arrowheads (white knockouts + black caps) -->
 <g shape-rendering="crispEdges">
  <rect x="481" y="327" width="5" height="8" fill="#fff"/>
  <rect x="482" y="330" width="1" height="4" fill="#000"/><rect x="485" y="327" width="1" height="2" fill="#000"/>
  <rect x="628" y="504" width="7" height="6" fill="#fff"/>
  <rect x="633" y="505" width="1" height="5" fill="#000"/><rect x="631" y="509" width="2" height="1" fill="#000"/><rect x="628" y="510" width="2" height="1" fill="#000"/><rect x="629" y="505" width="2" height="1" fill="#000"/>
  <rect x="473" y="424" width="6" height="8" fill="#fff"/>
  <rect x="474" y="428" width="1" height="3" fill="#000"/>
  <rect x="396" y="384" width="6" height="6" fill="#fff"/>
  <rect x="396" y="402" width="6" height="6" fill="#fff"/>
 </g>
 <g fill="#000">
  <path d="M481 336H487L485.5 338.5H482.5Z"/>
  <path d="M636 505V510L638.5 508.5V506.5Z"/>
  <path d="M402 384V390L404.5 388.5V385.5Z"/>
  <path d="M402 402V408L404.5 406.5V403.5Z"/>
 </g>
 <!-- tunnels -->
 <g fill="none" stroke="#000" stroke-width="1" shape-rendering="crispEdges">
  <path d="M657 261.5H654.5V271.5H657M662 261.5H665.5V271.5H662"/>
  <path d="M567 640.5H564.5V650.5H567M572 640.5H575.5V650.5H572"/>
 </g>

</g>
</svg>

<!-- canvas scrollbars -->
<div class="a" style="left:1005px;top:147px;width:17px;height:554px;background:linear-gradient(90deg,#EEEDE5,#FDFDFA)"></div>
<div class="a sbtn" style="left:1006px;top:147px;width:15px;height:16px"></div>
<svg class="a" style="left:1009px;top:151px" width="9" height="7"><path d="M1 5.5L4.5 2L8 5.5" stroke="#4D6185" stroke-width="2" fill="none"/></svg>
<div class="a sbtn" style="left:1006px;top:164px;width:15px;height:16px"></div>
<svg class="a" style="left:1010px;top:167px" width="8" height="9"><path d="M0 1.5H8M0 3.5H8M0 5.5H8M0 7.5H8" stroke="#EEF4FE" fill="none"/></svg>
<div class="a sbtn" style="left:1006px;top:684px;width:15px;height:16px"></div>
<svg class="a" style="left:1009px;top:689px" width="9" height="7"><path d="M1 1.5L4.5 5L8 1.5" stroke="#4D6185" stroke-width="2" fill="none"/></svg>
<div class="a" style="left:227px;top:701px;width:778px;height:17px;background:linear-gradient(#EEEDE5,#FDFDFA)"></div>
<div class="a sbtn" style="left:228px;top:702px;width:16px;height:15px"></div>
<svg class="a" style="left:233px;top:705px" width="7" height="9"><path d="M5 1L1.5 4.5L5 8" stroke="#4D6185" stroke-width="2" fill="none"/></svg>
<div class="a sbtn" style="left:252px;top:702px;width:16px;height:15px"></div>
<svg class="a" style="left:256px;top:706px" width="9" height="8"><path d="M0.5 0V8M2.5 0V8M4.5 0V8M6.5 0V8" stroke="#EEF4FE" fill="none"/></svg>
<div class="a sbtn" style="left:989px;top:702px;width:15px;height:15px"></div>
<svg class="a" style="left:993px;top:705px" width="7" height="9"><path d="M1.5 1L5 4.5L1.5 8" stroke="#4D6185" stroke-width="2" fill="none"/></svg>
<div class="a" style="left:1005px;top:701px;width:19px;height:17px;background:#ECE9D8"></div>
<div class="a" style="left:1022px;top:147px;width:2px;height:571px;background:#ECE9D8"></div>

<!-- splitter -->
<div class="a" style="left:222px;top:147px;width:1px;height:571px;background:#fff"></div>
<div class="a" style="left:226px;top:145px;width:1px;height:573px;background:#ACA899"></div>
<div class="a" style="left:227px;top:146px;width:1px;height:572px;background:#716F64"></div>
<div class="a" style="left:226px;top:145px;width:798px;height:1px;background:#ACA899"></div>
<div class="a" style="left:227px;top:146px;width:797px;height:1px;background:#716F64"></div>

<!-- Status bar -->
<div class="a sep-d" style="left:0;top:718px;width:1024px;height:1px"></div>
<div class="a sep-w" style="left:0;top:719px;width:1024px;height:1px"></div>
<div class="a" style="left:1px;top:723px;font-size:11px">Ready</div>
<div class="a" style="left:935px;top:722px;width:26px;height:16px;border:1px solid #ACA899;border-right-color:#fff;border-bottom-color:#fff"></div>
<div class="a" style="left:963px;top:722px;width:28px;height:16px;border:1px solid #ACA899;border-right-color:#fff;border-bottom-color:#fff"></div>
<div class="a" style="left:964px;top:724px;font-size:11px">NUM</div>
<div class="a" style="left:993px;top:722px;width:31px;height:16px;border:1px solid #ACA899;border-right-color:#fff;border-bottom-color:#fff"></div>
<!-- taskbar strip -->
<div class="a" style="left:0;top:738px;width:1024px;height:4px;background:linear-gradient(#2A6CE0,#3A80F3)"></div>
<div class="a" style="left:0;top:738px;width:92px;height:4px;background:linear-gradient(#2E7D32,#5FAE5F 40%,#7BBF7B)"></div>
<div class="a" style="left:931px;top:738px;width:93px;height:4px;background:linear-gradient(#0A6AD8,#18B4F0 40%,#18B4F0);border-left:1px solid #103C80"></div>

</body></html>
